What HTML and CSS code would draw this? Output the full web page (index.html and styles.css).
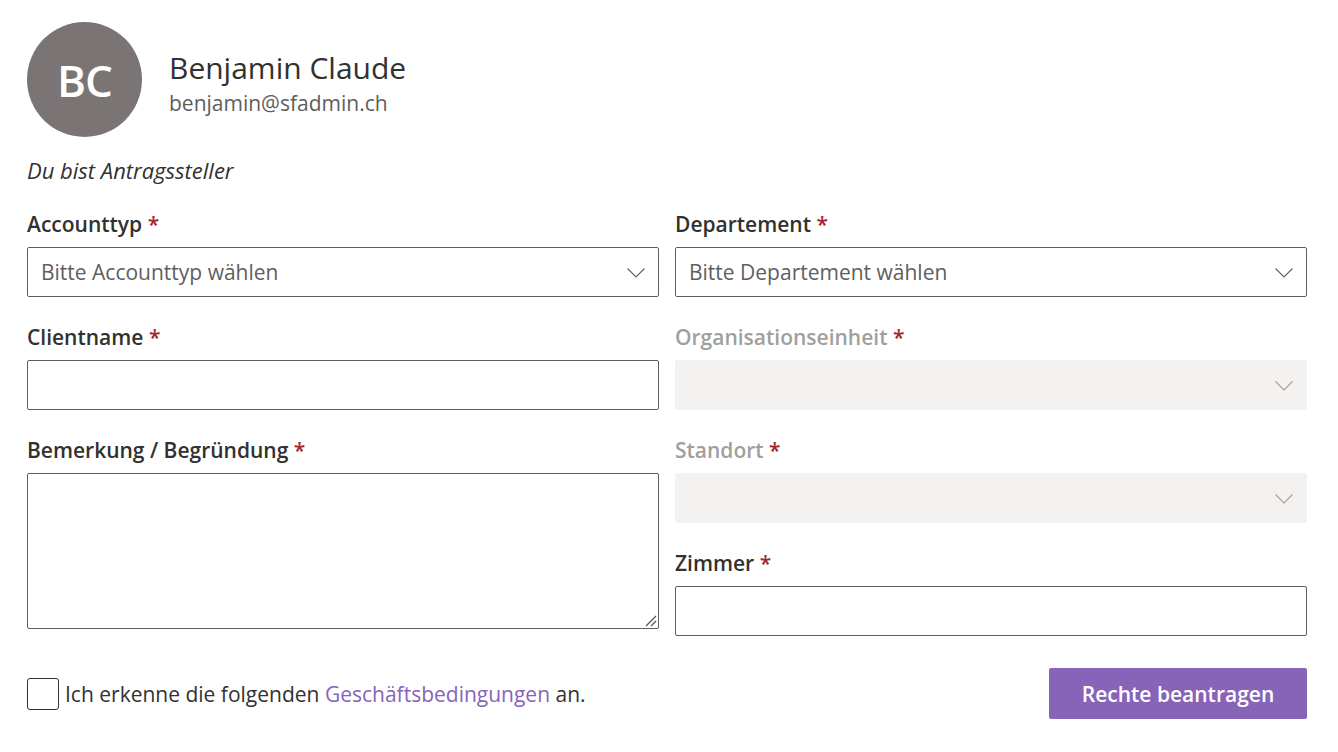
FILE: index.html
```html
<!DOCTYPE html>
<html lang="de">
<head>
<meta charset="utf-8">
<link rel="stylesheet" href="styles.css">
</head>
<body>
<div class="page">
  <div class="persona">
    <div class="avatar">BC</div>
    <div class="persona-text">
      <div class="name">Benjamin Claude</div>
      <div class="email">benjamin@sfadmin.ch</div>
    </div>
  </div>
  <div class="role">Du bist Antragssteller</div>

  <div class="grid">
    <div class="col">
      <div class="field">
        <label class="label">Accounttyp <span class="req">*</span></label>
        <div class="dropdown">
          <span class="placeholder">Bitte Accounttyp wählen</span>
          <svg class="chev" width="18" height="10" viewBox="0 0 18 10"><path d="M0.5 0.5 L9 9 L17.5 0.5" fill="none" stroke="currentColor" stroke-width="1.1"/></svg>
        </div>
      </div>
      <div class="field">
        <label class="label">Clientname <span class="req">*</span></label>
        <div class="textbox"></div>
      </div>
      <div class="field">
        <label class="label">Bemerkung / Begründung <span class="req">*</span></label>
        <div class="textarea">
          <svg class="grip" width="14" height="14" viewBox="0 0 14 14"><path d="M3 13 L13 3 M8 13 L13 8" stroke="#5a5a5a" stroke-width="1.4" fill="none"/></svg>
        </div>
      </div>
    </div>
    <div class="col">
      <div class="field">
        <label class="label">Departement <span class="req">*</span></label>
        <div class="dropdown">
          <span class="placeholder">Bitte Departement wählen</span>
          <svg class="chev" width="18" height="10" viewBox="0 0 18 10"><path d="M0.5 0.5 L9 9 L17.5 0.5" fill="none" stroke="currentColor" stroke-width="1.1"/></svg>
        </div>
      </div>
      <div class="field">
        <label class="label disabled">Organisationseinheit <span class="req">*</span></label>
        <div class="dropdown is-disabled">
          <span class="placeholder"></span>
          <svg class="chev" width="18" height="10" viewBox="0 0 18 10"><path d="M0.5 0.5 L9 9 L17.5 0.5" fill="none" stroke="currentColor" stroke-width="1.1"/></svg>
        </div>
      </div>
      <div class="field">
        <label class="label disabled">Standort <span class="req">*</span></label>
        <div class="dropdown is-disabled">
          <span class="placeholder"></span>
          <svg class="chev" width="18" height="10" viewBox="0 0 18 10"><path d="M0.5 0.5 L9 9 L17.5 0.5" fill="none" stroke="currentColor" stroke-width="1.1"/></svg>
        </div>
      </div>
      <div class="field">
        <label class="label">Zimmer <span class="req">*</span></label>
        <div class="textbox"></div>
      </div>
    </div>
  </div>

  <div class="footer">
    <div class="check">
      <span class="box"></span>
      <span class="check-text">Ich erkenne die folgenden <a class="link">Geschäftsbedingungen</a> an.</span>
    </div>
    <button class="primary">Rechte beantragen</button>
  </div>
</div>
</body>
</html>
```
FILE: styles.css
```css
* { box-sizing: border-box; }
html, body { margin: 0; padding: 0; background: #ffffff; }
body {
  font-family: "Open Sans", "Noto Sans", "Liberation Sans", sans-serif;
  color: #323130;
}
.page {
  width: 1338px;
  padding: 22px 31px 0 27px;
}
.persona {
  display: flex;
  align-items: flex-start;
  gap: 27px;
}
.avatar {
  width: 115px;
  height: 115px;
  border-radius: 50%;
  background: #7a7574;
  color: #ffffff;
  font-size: 44px;
  font-weight: 600;
  display: flex;
  align-items: center;
  justify-content: center;
  letter-spacing: -1px;
}
.persona-text { padding-top: 27px; }
.name {
  font-size: 30px;
  line-height: 38px;
  color: #323130;
}
.email {
  margin-top: 2px;
  font-size: 21px;
  line-height: 28px;
  color: #605e5c;
}
.role {
  margin-top: 18px;
  font-size: 22px;
  font-style: italic;
  line-height: 30px;
  color: #323130;
}
.grid {
  display: grid;
  grid-template-columns: 1fr 1fr;
  column-gap: 16px;
  margin-top: 24px;
}
.col { display: flex; flex-direction: column; gap: 25px; }
.field { display: flex; flex-direction: column; gap: 8px; }
.label {
  font-size: 21px;
  line-height: 30px;
  font-weight: 600;
  color: #323130;
}
.label.disabled { color: #a19f9d; }
.req { color: #a4262c; }
.dropdown, .textbox {
  height: 50px;
  border: 1px solid #605e5c;
  border-radius: 2px;
  display: flex;
  align-items: center;
  justify-content: space-between;
  padding: 0 13px;
}
.placeholder {
  font-size: 21px;
  color: #605e5c;
}
.chev { color: #605e5c; margin-top: 2px; }
.dropdown.is-disabled {
  border-color: #f3f2f1;
  background: #f3f2f1;
}
.dropdown.is-disabled .chev { color: #a19f9d; }
.textarea {
  height: 156px;
  border: 1px solid #605e5c;
  border-radius: 2px;
  position: relative;
}
.grip { position: absolute; right: 1px; bottom: 1px; }
.footer {
  margin-top: 32px;
  display: flex;
  justify-content: space-between;
  align-items: center;
}
.check { display: flex; align-items: center; gap: 6px; }
.box {
  width: 32px;
  height: 32px;
  border: 1px solid #323130;
  border-radius: 3px;
}
.check-text {
  font-size: 21px;
  color: #323130;
}
.link { color: #8764b8; text-decoration: none; }
.primary {
  width: 258px;
  height: 51px;
  background: #8764b8;
  border: none;
  border-radius: 2px;
  color: #ffffff;
  font-family: inherit;
  font-size: 21px;
  font-weight: 600;
}
```
